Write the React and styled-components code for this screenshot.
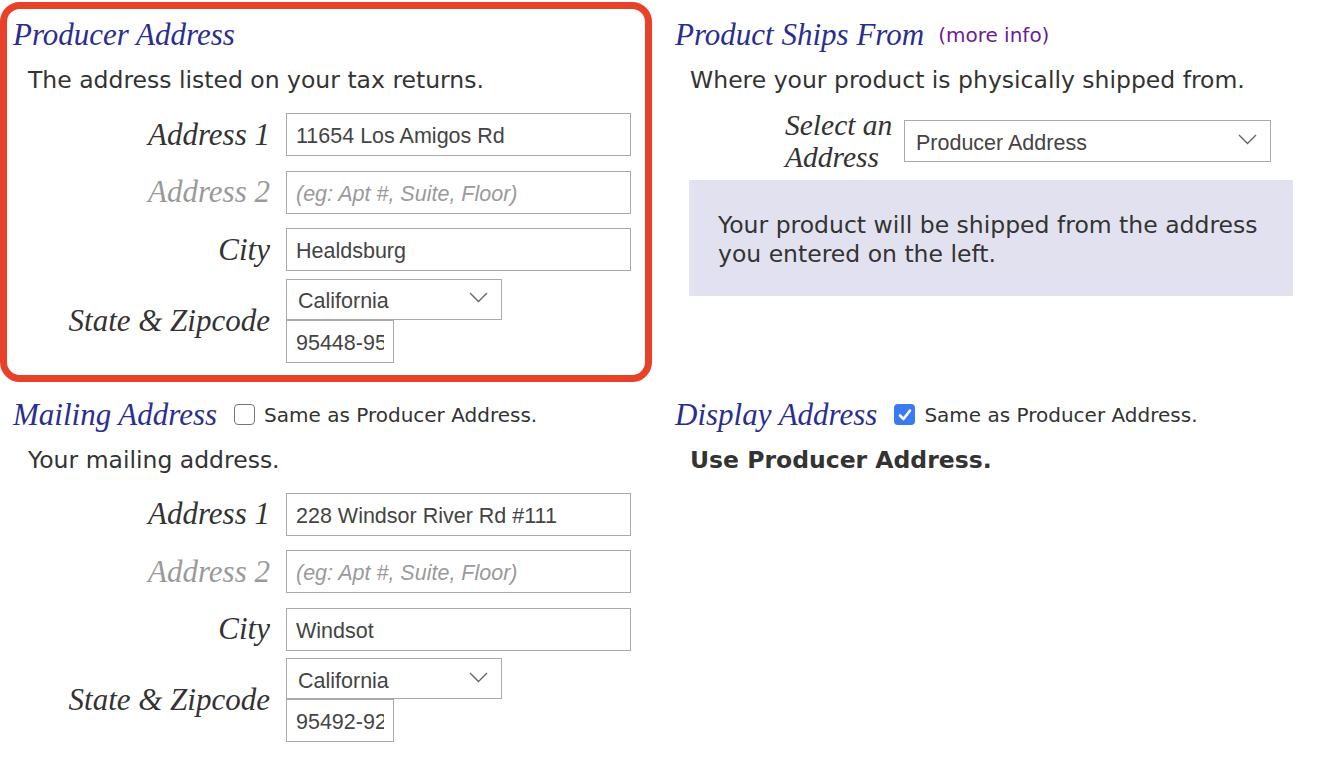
import React from 'react';
import styled, { createGlobalStyle } from 'styled-components';

const GlobalStyle = createGlobalStyle`
  html, body {
    margin: 0;
    padding: 0;
    background: #fff;
  }
  body {
    font-family: "DejaVu Sans", Verdana, sans-serif;
    color: #333;
  }
`

const Page = styled.div`
  display: grid;
  grid-template-columns: 652px 656px;
  column-gap: 10px;
  padding-top: 2px;
  width: 1318px;
`

const Section = styled.section`
  box-sizing: border-box;
  border: 7px solid ${(p) => (p.highlight ? '#e8412a' : 'transparent')};
  border-radius: 20px;
  padding: 10px ${(p) => p.padRight || 6}px 12px 6px;
`

const HeadRow = styled.div`
  display: flex;
  align-items: center;
  height: 32px;
`

const Heading = styled.h2`
  margin: 0;
  font-family: "Liberation Serif", "Times New Roman", serif;
  font-style: italic;
  font-weight: normal;
  font-size: 31px;
  line-height: 32px;
  color: #2b2e8f;
  white-space: nowrap;
`

const MoreInfo = styled.a`
  margin-left: 14px;
  font-size: 20px;
  color: #6a1b9a;
  text-decoration: none;
  cursor: pointer;
`

const CheckLabel = styled.label`
  display: flex;
  align-items: center;
  margin-left: 17px;
  font-size: 20px;
  color: #333;
  cursor: pointer;
`

const Box = styled.span`
  box-sizing: border-box;
  width: 21px;
  height: 21px;
  margin-right: 9px;
  border-radius: 4px;
  border: ${(p) => (p.checked ? 'none' : '1.5px solid #767676')};
  background: ${(p) => (p.checked ? '#3a7bf2' : '#fff')};
  display: flex;
  align-items: center;
  justify-content: center;
`

const Desc = styled.p`
  margin: 15px 0 0 15px;
  font-size: 23.5px;
  line-height: 28px;
  color: #333;
  font-weight: ${(p) => (p.bold ? 'bold' : 'normal')};
`

const Fields = styled.div`
  margin-top: 12px;
`

const FieldRow = styled.div`
  display: flex;
  align-items: center;
  min-height: 57.5px;
`

const Label = styled.label`
  box-sizing: border-box;
  width: 273px;
  padding-right: 16px;
  text-align: right;
  font-family: "Liberation Serif", "Times New Roman", serif;
  font-style: italic;
  font-size: 31px;
  color: ${(p) => (p.muted ? '#9a9a9a' : '#333')};
`

const Input = styled.input`
  box-sizing: border-box;
  width: ${(p) => p.w || 345}px;
  height: 43px;
  padding: 4px 9px 0;
  border: 1px solid #a9a9a9;
  border-radius: 0;
  font-family: "Liberation Sans", Arial, sans-serif;
  font-size: 21.5px;
  color: #444;
  outline: none;
  &::placeholder {
    font-style: italic;
    color: #9a9a9a;
  }
`

const Stack = styled.div`
  display: flex;
  flex-direction: column;
  align-items: flex-start;
`

const SelectWrap = styled.div`
  position: relative;
  width: ${(p) => p.w}px;
`

const Select = styled.select`
  appearance: none;
  box-sizing: border-box;
  width: 100%;
  height: ${(p) => p.h || 41}px;
  padding: 4px 36px 0 11px;
  border: 1px solid #a9a9a9;
  border-radius: 0;
  background: #fff;
  font-family: "Liberation Sans", Arial, sans-serif;
  font-size: 21.5px;
  color: #444;
  outline: none;
`

const Chevron = styled.svg`
  position: absolute;
  right: 14px;
  top: 50%;
  margin-top: -7px;
  pointer-events: none;
`

const PickRow = styled.div`
  display: flex;
  align-items: center;
  margin: 15px 0 0 110px;
`

const PickLabel = styled.label`
  width: 119px;
  flex-shrink: 0;
  white-space: nowrap;
  font-family: "Liberation Serif", "Times New Roman", serif;
  font-style: italic;
  font-size: 29.5px;
  line-height: 32px;
  color: #333;
`

const InfoBox = styled.div`
  margin: 7px 0 0 14px;
  padding: 31px 29px 27px;
  background: #e2e1ef;
  font-size: 23.5px;
  line-height: 29px;
  color: #333;
`

function Dropdown({ w, h, value, options }) {
  return (
    <SelectWrap w={w}>
      <Select h={h} defaultValue={value}>
        {options.map((o) => (
          <option key={o}>{o}</option>
        ))}
      </Select>
      <Chevron width="19" height="11" viewBox="0 0 19 11">
        <path d="M1 1 L9.5 9.5 L18 1" fill="none" stroke="#666" strokeWidth="1.4" />
      </Chevron>
    </SelectWrap>
  );
}

function Check({ checked, text }) {
  return (
    <CheckLabel>
      <Box checked={checked}>
        {checked && (
          <svg width="14" height="14" viewBox="0 0 14 14">
            <path d="M2 7.5 L5.5 11 L12 2.5" fill="none" stroke="#fff" strokeWidth="2.6" strokeLinecap="round" strokeLinejoin="round" />
          </svg>
        )}
      </Box>
      {text}
    </CheckLabel>
  );
}

const states = ['California', 'Oregon', 'Washington', 'Nevada'];

function AddressFields({ addr1, city, zip }) {
  return (
    <Fields>
      <FieldRow>
        <Label>Address 1</Label>
        <Input defaultValue={addr1} />
      </FieldRow>
      <FieldRow>
        <Label muted>Address 2</Label>
        <Input placeholder="(eg: Apt #, Suite, Floor)" />
      </FieldRow>
      <FieldRow>
        <Label>City</Label>
        <Input defaultValue={city} />
      </FieldRow>
      <FieldRow>
        <Label>State &amp; Zipcode</Label>
        <Stack>
          <Dropdown w={216} value="California" options={states} />
          <Input w={108} defaultValue={zip} />
        </Stack>
      </FieldRow>
    </Fields>
  );
}

export default function App() {
  return (
    <>
      <GlobalStyle />
      <Page>
        <Section highlight>
          <HeadRow>
            <Heading>Producer Address</Heading>
          </HeadRow>
          <Desc>The address listed on your tax returns.</Desc>
          <AddressFields addr1="11654 Los Amigos Rd" city="Healdsburg" zip="95448-9512" />
        </Section>

        <Section padRight={18}>
          <HeadRow>
            <Heading>Product Ships From</Heading>
            <MoreInfo>(more info)</MoreInfo>
          </HeadRow>
          <Desc>Where your product is physically shipped from.</Desc>
          <PickRow>
            <PickLabel>
              Select an
              <br />
              Address
            </PickLabel>
            <Dropdown w={367} h={42} value="Producer Address" options={['Producer Address', 'Mailing Address']} />
          </PickRow>
          <InfoBox>Your product will be shipped from the address you entered on the left.</InfoBox>
        </Section>

        <Section>
          <HeadRow>
            <Heading>Mailing Address</Heading>
            <Check text="Same as Producer Address." />
          </HeadRow>
          <Desc>Your mailing address.</Desc>
          <AddressFields addr1="228 Windsor River Rd #111" city="Windsot" zip="95492-9211" />
        </Section>

        <Section>
          <HeadRow>
            <Heading>Display Address</Heading>
            <Check checked text="Same as Producer Address." />
          </HeadRow>
          <Desc bold>Use Producer Address.</Desc>
        </Section>
      </Page>
    </>
  );
}
